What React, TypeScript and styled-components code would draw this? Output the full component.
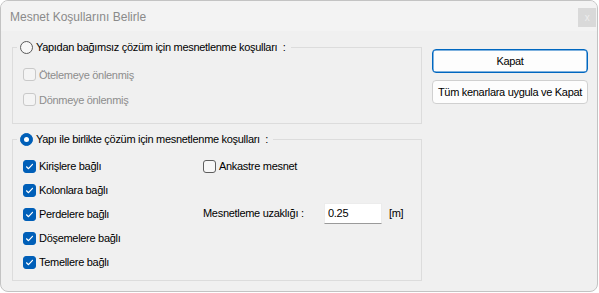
import React from "react";
import styled, { createGlobalStyle } from "styled-components";

const GlobalStyle = createGlobalStyle`
  html, body {
    margin: 0;
    padding: 0;
    background: #ffffff;
  }
  * {
    box-sizing: border-box;
  }
`;

const Window = styled.div`
  width: 598px;
  height: 292px;
  border: 1px solid #c3c3c3;
  border-radius: 8px;
  background: #f0f0f0;
  overflow: hidden;
  display: flex;
  flex-direction: column;
  font-family: "Liberation Sans", Arial, sans-serif;
  font-size: 11px;
  letter-spacing: -0.3px;
  color: #000;
`;

const TitleBar = styled.div`
  height: 30px;
  flex: none;
  display: flex;
  justify-content: space-between;
  align-items: flex-start;
  background: #f3f3f3;
  padding: 0 1px 0 9px;
`;

const Title = styled.span`
  margin-top: 9px;
  font-size: 12px;
  letter-spacing: 0;
  color: #8a8a8a;
`;

const CloseButton = styled.div`
  width: 18px;
  height: 19px;
  margin-top: 7px;
  background: #d9d9d9;
  color: #ededed;
  font-size: 10px;
  display: flex;
  align-items: center;
  justify-content: center;
`;

const Body = styled.div`
  flex: 1;
  display: flex;
  gap: 10px;
  padding: 9px 9px 0 11px;
`;

const LeftColumn = styled.div`
  width: 410px;
  display: flex;
  flex-direction: column;
  gap: 8px;
`;

const Group = styled.fieldset`
  margin: 0;
  padding: 0;
  border: 1px solid #dcdcdc;
  min-width: 0;
`;

const Legend = styled.legend`
  display: flex;
  align-items: center;
  gap: 3px;
  height: 15px;
  line-height: 15px;
  margin-left: 4px;
  padding: 0 5px 0 3px;
`;

const Radio = styled.span<{ $checked?: boolean }>`
  width: 13px;
  height: 13px;
  border-radius: 50%;
  flex: none;
  position: relative;
  background: ${(p) => (p.$checked ? "#005fb8" : "#f7f7f7")};
  border: 1px solid ${(p) => (p.$checked ? "#005fb8" : "#5a5a5a")};
  &::after {
    content: "";
    display: ${(p) => (p.$checked ? "block" : "none")};
    position: absolute;
    left: 3px;
    top: 3px;
    width: 5px;
    height: 5px;
    border-radius: 50%;
    background: #fff;
  }
`;

const GroupContent = styled.div<{ $top: number; $bottom: number }>`
  padding: ${(p) => p.$top}px 10px ${(p) => p.$bottom}px 10px;
`;

const Stack = styled.div`
  display: flex;
  flex-direction: column;
`;

const Grid = styled.div`
  display: grid;
  grid-template-columns: 180px 1fr;
  grid-auto-rows: 24px;
`;

const CheckRow = styled.label<{ $height: number; $disabled?: boolean; $col?: number; $row?: number }>`
  display: flex;
  align-items: center;
  gap: 3px;
  height: ${(p) => p.$height}px;
  color: ${(p) => (p.$disabled ? "#8d8d8d" : "#000")};
  grid-column: ${(p) => p.$col ?? "auto"};
  grid-row: ${(p) => p.$row ?? "auto"};
`;

const Box = styled.span<{ $checked?: boolean; $disabled?: boolean }>`
  width: 13px;
  height: 13px;
  flex: none;
  border-radius: 3px;
  display: flex;
  align-items: center;
  justify-content: center;
  background: ${(p) => (p.$checked ? "#005fb8" : p.$disabled ? "#f4f4f4" : "#f7f7f7")};
  border: 1px solid
    ${(p) => (p.$checked ? "#005fb8" : p.$disabled ? "#c9c9c9" : "#5e5e5e")};
`;

const FieldRow = styled.div`
  grid-column: 2;
  grid-row: 3;
  display: flex;
  align-items: center;
  margin-top: -2px;
`;

const FieldLabel = styled.span`
  width: 121px;
`;

const NumberInput = styled.input`
  width: 58px;
  height: 21px;
  border: 1px solid #ececec;
  border-bottom-color: #9a9a9a;
  background: #fff;
  padding: 0 3px;
  font: inherit;
  letter-spacing: inherit;
  color: #000;
  outline: none;
`;

const Unit = styled.span`
  margin-left: 7px;
`;

const ButtonColumn = styled.div`
  width: 156px;
  display: flex;
  flex-direction: column;
  gap: 7px;
  padding-top: 9px;
`;

const Button = styled.button<{ $default?: boolean }>`
  height: 24px;
  width: 100%;
  padding: 0;
  border-radius: 4px;
  background: #fdfdfd;
  border: 1px solid ${(p) => (p.$default ? "#0067c0" : "#d0d0d0")};
  box-shadow: ${(p) => (p.$default ? "inset 0 0 0 0.5px #0067c0" : "none")};
  font: inherit;
  letter-spacing: inherit;
  color: #000;
`;

const Check = ({
  label,
  checked,
  disabled,
  height,
  col,
  row,
}: {
  label: string;
  checked?: boolean;
  disabled?: boolean;
  height: number;
  col?: number;
  row?: number;
}) => (
  <CheckRow $height={height} $disabled={disabled} $col={col} $row={row}>
    <Box $checked={checked} $disabled={disabled}>
      {checked && (
        <svg width="9" height="9" viewBox="0 0 9 9">
          <polyline
            points="1.5,4.8 3.5,6.7 7.5,2.3"
            fill="none"
            stroke="#fff"
            strokeWidth="1.2"
            strokeLinecap="round"
            strokeLinejoin="round"
          />
        </svg>
      )}
    </Box>
    <span>{label}</span>
  </CheckRow>
);

const connected = ["Kirişlere bağlı", "Kolonlara bağlı", "Perdelere bağlı", "Döşemelere bağlı", "Temellere bağlı"];

export default function App() {
  return (
    <>
      <GlobalStyle />
      <Window>
        <TitleBar>
          <Title>Mesnet Koşullarını Belirle</Title>
          <CloseButton>x</CloseButton>
        </TitleBar>
        <Body>
          <LeftColumn>
            <Group>
              <Legend>
                <Radio />
                <span>Yapıdan bağımsız çözüm için mesnetlenme koşulları &nbsp;:</span>
              </Legend>
              <GroupContent $top={7} $bottom={11}>
                <Stack>
                  <Check label="Ötelemeye önlenmiş" disabled height={25} />
                  <Check label="Dönmeye önlenmiş" disabled height={25} />
                </Stack>
              </GroupContent>
            </Group>
            <Group>
              <Legend>
                <Radio $checked />
                <span>Yapı ile birlikte çözüm için mesnetlenme koşulları &nbsp;:</span>
              </Legend>
              <GroupContent $top={7} $bottom={6}>
                <Grid>
                  {connected.map((c, i) => (
                    <Check key={c} label={c} checked height={24} col={1} row={i + 1} />
                  ))}
                  <Check label="Ankastre mesnet" height={24} col={2} row={1} />
                  <FieldRow>
                    <FieldLabel>Mesnetleme uzaklığı :</FieldLabel>
                    <NumberInput defaultValue="0.25" />
                    <Unit>[m]</Unit>
                  </FieldRow>
                </Grid>
              </GroupContent>
            </Group>
          </LeftColumn>
          <ButtonColumn>
            <Button $default>Kapat</Button>
            <Button>Tüm kenarlara uygula ve Kapat</Button>
          </ButtonColumn>
        </Body>
      </Window>
    </>
  );
}
